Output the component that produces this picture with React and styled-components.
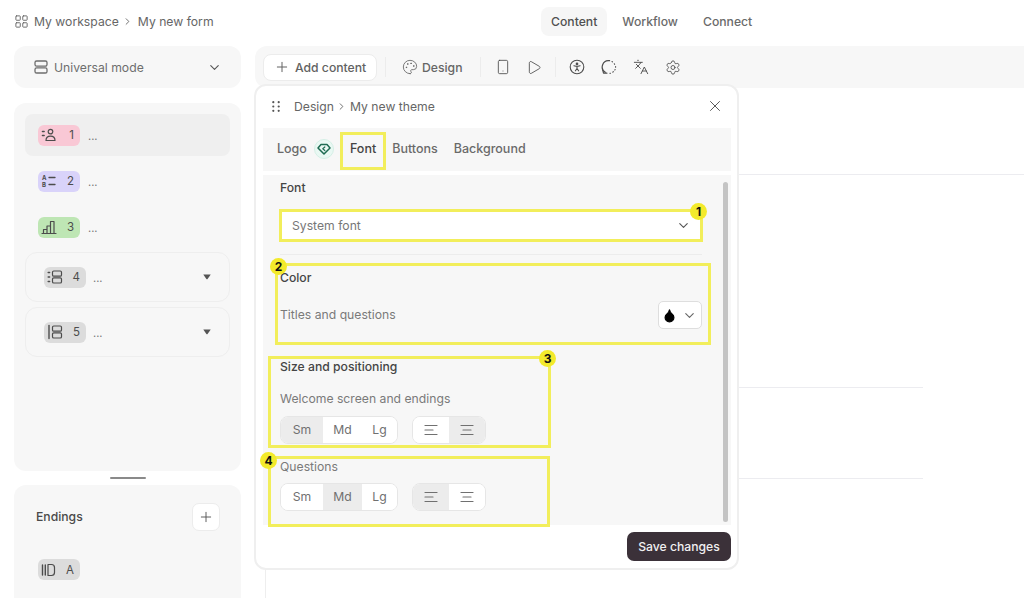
import React from "react";
import styled, { createGlobalStyle } from "styled-components";
import { ChevronDown, ChevronRight, Plus, Palette, Smartphone, Play, Languages, Settings, X, Droplet, LayoutGrid } from "lucide-react";

const Global = createGlobalStyle`
  html, body { margin: 0; padding: 0; background: #fff; overflow: hidden; }
  body { font-family: Inter, "Liberation Sans", sans-serif; font-size: 12.2px; color: #5f5f5f; }
  * { box-sizing: border-box; }
`;

const Page = styled.div`
  position: relative;
  width: 1024px;
  height: 598px;
  overflow: hidden;
  background: #fff;
`;
const Header = styled.header`
  display: flex;
  align-items: center;
  height: 42px;
  padding: 0 14px;
`;
const Crumbs = styled.div`
  display: flex;
  align-items: center;
  width: 527px;
  color: #666;
  gap: 3px;
  svg { flex: none; }
  svg:first-child { margin-right: 2px; }
`;
const CrumbGap = styled.span`
  margin-left: 2px;
`;
const Nav = styled.nav`
  display: flex;
  gap: 5px;
`;
const NavItem = styled.div`
  display: flex;
  align-items: center;
  height: 29px;
  padding: 0 10px;
  border-radius: 8px;
  font-weight: 500;
  color: ${(p) => (p.$active ? "#505050" : "#6a6a6a")};
  background: ${(p) => (p.$active ? "#f6f6f6" : "transparent")};
`;
const Body = styled.div`
  display: grid;
  grid-template-columns: 227px 769px;
  column-gap: 14px;
  padding: 4px 0 0 14px;
  height: 556px;
`;
const Side = styled.aside`
  display: flex;
  flex-direction: column;
  height: 100%;
`;
const ModeBar = styled.div`
  display: flex;
  align-items: center;
  height: 42px;
  padding: 0 19px;
  gap: 5px;
  border-radius: 12px;
  background: #f7f7f7;
  color: #6e6e6e;
  flex: none;
`;
const Push = styled.span`
  margin-left: auto;
  display: flex;
  color: #555;
`;
const QuestionPanel = styled.div`
  display: flex;
  flex-direction: column;
  gap: 4px;
  height: 368px;
  margin-top: 15px;
  padding: 11px;
  border-radius: 12px;
  background: #f7f7f7;
  flex: none;
`;
const Row = styled.div`
  display: flex;
  align-items: center;
  gap: 8px;
  height: 42px;
  padding: 0 13px;
  border-radius: 8px;
  background: ${(p) => (p.$active ? "#efefef" : "transparent")};
  flex: none;
`;
const GroupRow = styled.div`
  display: flex;
  align-items: center;
  gap: 7px;
  height: 50px;
  padding: 0 18px;
  border: 1px solid #eeeeee;
  border-radius: 12px;
  flex: none;
  & + & { margin-top: 1px; }
`;
const Badge = styled.div`
  display: flex;
  align-items: center;
  justify-content: space-between;
  width: 42px;
  height: 21px;
  padding: 0 6px 0 3px;
  border-radius: 6px;
  font-size: 11.500px;
  color: #4c4c4c;
  background: ${(p) => p.$bg};
`;
const Dots = styled.span`
  font-size: 11px;
  line-height: 1;
  color: #777;
  padding-top: 3px;
`;
const Handle = styled.div`
  width: 36px;
  height: 2px;
  margin: 6px auto 6px;
  background: #8a8a8a;
  border-radius: 2px;
  flex: none;
`;
const EndPanel = styled.div`
  flex: 1;
  padding: 18px 21px 0 22px;
  border-radius: 12px 12px 0 0;
  background: #f7f7f7;
`;
const EndHead = styled.div`
  display: flex;
  align-items: center;
  justify-content: space-between;
  font-weight: 500;
  color: #4a4a4a;
  span { margin-top: -2px; }
`;
const SquareBtn = styled.button`
  display: flex;
  align-items: center;
  justify-content: center;
  width: 28px;
  height: 28px;
  padding: 0;
  border: 1px solid #ececec;
  border-radius: 7px;
  background: #fff;
  color: #555;
`;
const EndBadgeWrap = styled.div`
  margin: 28px 0 0 2px;
`;
const Main = styled.main`
  display: flex;
  flex-direction: column;
  height: 100%;
`;
const Toolbar = styled.div`
  display: flex;
  align-items: center;
  height: 42px;
  padding-left: 8px;
  border-radius: 12px 0 0 12px;
  background: #f7f7f7;
  flex: none;
`;
const AddBtn = styled.button`
  display: flex;
  align-items: center;
  gap: 5px;
  width: 114px;
  height: 27px;
  padding: 0 0 0 10px;
  border: 1px solid #ececec;
  border-radius: 8px;
  background: #fff;
  color: #626262;
  font: 500 12.200px Inter, "Liberation Sans", sans-serif;
`;
const Sep = styled.span`
  width: 1px;
  height: 20px;
  margin: ${(p) => p.$m};
  background: #ececec;
  flex: none;
`;
const ToolText = styled.span`
  display: flex;
  align-items: center;
  gap: 4px;
  font-weight: 500;
  color: #666;
`;
const ToolIcon = styled.span`
  display: flex;
  justify-content: center;
  width: 16px;
  margin-right: ${(p) => p.$mr || 16}px;
  color: #4e4e4e;
  flex: none;
`;
const Canvas = styled.div`
  flex: 1;
  margin-left: 10px;
  border-left: 1px solid #eeeeee;
`;
const Rule = styled.div`
  height: ${(p) => p.$h}px;
  width: ${(p) => p.$w}px;
  border-bottom: 1px solid #ececf0;
`;
const Dialog = styled.section`
  position: absolute;
  left: 254px;
  top: 84px;
  display: flex;
  flex-direction: column;
  width: 485px;
  height: 486px;
  padding: 0 6px 0 7px;
  border: 2px solid #efefef;
  border-radius: 12px;
  background: #fff;
`;
const DialogHead = styled.div`
  display: flex;
  align-items: center;
  height: 42px;
  padding: 0 7px 2px 9px;
  color: #666;
  gap: 2px;
  flex: none;
`;
const TitleStart = styled.span`
  margin-left: 12px;
`;
const TitleEnd = styled.span`
  margin-left: 1px;
`;
const Tabs = styled.div`
  display: flex;
  align-items: center;
  gap: 16px;
  height: 43px;
  padding: 0 0 2px 14px;
  background: #f7f7f7;
  font-size: 12.5px;
  flex: none;
`;
const Tab = styled.div`
  display: flex;
  align-items: center;
  gap: 7px;
  height: 100%;
  font-weight: 500;
  color: ${(p) => (p.$active ? "#444" : "#6a6a6a")};
`;
const GemDot = styled.span`
  display: flex;
  align-items: center;
  justify-content: center;
  width: 20px;
  height: 20px;
  border: 1px solid #d5efe6;
  border-radius: 50%;
  background: #e9f8f3;
  color: #1e6b52;
`;
const Content = styled.div`
  position: relative;
  display: flex;
  flex-direction: column;
  height: 350px;
  margin-top: 4px;
  padding: 5px 29px 0 17px;
  background: #f7f7f7;
  flex: none;
`;
const Scrollbar = styled.div`
  position: absolute;
  top: 7px;
  right: 3px;
  width: 5px;
  height: 340px;
  border-radius: 3px;
  background: #c4c4c4;
`;
const Title = styled.div`
  height: 16px;
  line-height: 16px;
  font-weight: 500;
  color: #454545;
`;
const Sub = styled.div`
  height: 16px;
  line-height: 16px;
  color: #7a7a7a;
`;
const Select = styled.div`
  display: flex;
  align-items: center;
  justify-content: space-between;
  height: 29px;
  margin-top: 15px;
  padding: 0 11px 0 12px;
  background: #fff;
  color: #777;
  border-radius: 4px;
  svg { color: #555; }
`;
const Divider = styled.div`
  height: 1px;
  margin: 14px 0 15px;
  background: #ececec;
`;
const ColorRow = styled.div`
  display: flex;
  align-items: center;
  justify-content: space-between;
  margin-top: 15px;
`;
const ColorBtn = styled.div`
  display: flex;
  align-items: center;
  justify-content: space-between;
  width: 44px;
  height: 28px;
  padding: 0 4px 0 3px;
  background: #fff;
  border: 1px solid #dedede;
  border-radius: 5px;
  color: #666;
`;
const TitleSize = styled(Title)`
  margin-top: 30px;
`;
const SubGap = styled(Sub)`
  margin-top: 16px;
`;
const SubQuestions = styled(Sub)`
  margin-top: 15px;
`;
const Controls = styled.div`
  display: flex;
  gap: 14px;
  margin-top: ${(p) => p.$mt}px;
`;
const Seg = styled.div`
  display: flex;
  height: 28px;
  border: 1px solid #e6e6e6;
  border-radius: 8px;
  overflow: hidden;
  background: #fff;
`;
const SegBtn = styled.div`
  display: flex;
  align-items: center;
  justify-content: center;
  width: ${(p) => p.$w}px;
  padding-bottom: 1px;
  color: #707070;
  background: ${(p) => (p.$active ? "#ececec" : "#fff")};
`;
const Footer = styled.div`
  display: flex;
  justify-content: flex-end;
  padding-top: 7px;
`;
const SaveBtn = styled.button`
  width: 104px;
  height: 29px;
  padding: 0;
  border: 0;
  border-radius: 7px;
  background: #3b3139;
  color: #f1eff1;
  font: 500 12.200px Inter, "Liberation Sans", sans-serif;
`;
const Box = styled.div`
  position: absolute;
  left: ${(p) => p.$x}px;
  top: ${(p) => p.$y}px;
  width: ${(p) => p.$w}px;
  height: ${(p) => p.$h}px;
  border: 3px solid #f2ee5b;
  pointer-events: none;
`;
const Pin = styled.div`
  position: absolute;
  left: ${(p) => p.$x}px;
  top: ${(p) => p.$y}px;
  width: 17px;
  height: 17px;
  border-radius: 50%;
  background: #f3ea2b;
  color: #111;
  font: 700 12px/17px Inter, "Liberation Sans", sans-serif;
  text-align: center;
`;

const Ico = ({ children, w = 16, sw = 1.200 }) => (
  <svg width={w} height="16" viewBox="0 0 16 16" fill="none" stroke="currentColor" strokeWidth={sw} strokeLinecap="round" strokeLinejoin="round">{children}</svg>
);
const ModeIcon = () => (
  <Ico sw={1.300}><rect x="2" y="2" width="12" height="5.200" rx="1.600" /><rect x="2" y="8.800" width="12" height="5.200" rx="1.600" /></Ico>
);
const ContactIcon = () => (
  <Ico><circle cx="9.500" cy="4.600" r="2.300" /><path d="M5 13.500c0-3 1.800-4.400 4.500-4.400s4.500 1.400 4.500 4.400z" /><path d="M1.500 4.500h1.600M1.500 8.500h1.600" strokeWidth="1.600" /></Ico>
);
const ChoiceIcon = () => (
  <Ico>
    <text x="1" y="7" fontSize="6" fontWeight="700" fill="currentColor" stroke="none" fontFamily="Inter, sans-serif">A</text>
    <text x="1" y="14" fontSize="6" fontWeight="700" fill="currentColor" stroke="none" fontFamily="Inter, sans-serif">B</text>
    <path d="M8 4.500h6M8 11.500h6" strokeWidth="1.300" />
  </Ico>
);
const BarsIcon = () => (
  <Ico><path d="M1 14.500h14M2.500 14.500v-4h3.500v4M6 14.500V7h3.500v7.500M9.500 14.500V2.500H13v12" /></Ico>
);
const ListGroupIcon = () => (
  <Ico><path d="M1.200 3.500h1.400M1.200 8h1.400M1.200 12.500h1.400" strokeWidth="1.500" /><rect x="5.500" y="2" width="9" height="5.200" rx="1.300" /><rect x="5.500" y="8.800" width="9" height="5.200" rx="1.300" /></Ico>
);
const SideGroupIcon = () => (
  <Ico><path d="M2 1.500v13" strokeWidth="1.400" /><rect x="5.500" y="2" width="9" height="5.200" rx="1.300" /><rect x="5.500" y="8.800" width="9" height="5.200" rx="1.300" /></Ico>
);
const EndIcon = () => (
  <Ico><path d="M1.500 3v10M4.300 3v10" strokeWidth="1.400" /><path d="M7 2.500h3.500a3 3 0 0 1 3 3v5a3 3 0 0 1-3 3H7z" /></Ico>
);
const Caret = () => (
  <svg width="8" height="6" viewBox="0 0 8 6"><path d="M0.300 0.500h7.400L4.600 5a.8.8 0 0 1-1.200 0z" fill="#555" /></svg>
);
const A11yIcon = () => (
  <Ico sw={1.100}><circle cx="8" cy="8" r="6.800" /><circle cx="8" cy="4.900" r=".8" fill="currentColor" /><path d="M4.900 6.700l2.100.6h2l2.100-.6M8 7.300v2.200M8 9.500l-1.600 2.300M8 9.500l1.600 2.300" /></Ico>
);
const LoopIcon = () => (
  <Ico>
    <path d="M4.300 13.300A6.300 6.300 0 0 1 8.600 1.700" />
    <path d="M11 2.500l.5.400M13.300 4.800l.3.500M14.600 7.600v.6M14.100 10.500l-.3.500M12.300 12.700l-.5.400M9.500 14.200h-.6" strokeWidth="1.100" />
    <path d="M1.700 10.800l.8 3.400h3.400" />
  </Ico>
);
const GemIcon = () => (
  <svg width="14" height="14" viewBox="0 0 14 14" fill="none" stroke="currentColor" strokeWidth="1.500" strokeLinejoin="round" strokeLinecap="round">
    <path d="M4 2.500h6L13 6l-6 6-6-6z" />
    <path d="M7.800 5L5.800 6.800l2 1.700" strokeWidth="1.200" />
  </svg>
);
const GripIcon = () => (
  <svg width="8" height="11" viewBox="0 0 8 11" fill="#555">
    {[1.200, 5.500, 9.800].map((y) => [1.300, 6.700].map((x) => <circle key={x + "-" + y} cx={x} cy={y} r="1.100" />))}
  </svg>
);
const AlignIcon = ({ center }) => (
  <Ico>
    <path d={center ? "M2 3.500h12M4 8h8M2 12.500h12" : "M2 3.500h12M2 8h8M2 12.500h12"} />
  </Ico>
);

const Questions = [
  { n: "1", bg: "#f9c8d5", icon: <ContactIcon />, active: true },
  { n: "2", bg: "#d9d3fa", icon: <ChoiceIcon /> },
  { n: "3", bg: "#bee6b4", icon: <BarsIcon /> },
];
const Groups = [
  { n: "4", icon: <ListGroupIcon /> },
  { n: "5", icon: <SideGroupIcon /> },
];
const Callouts = [
  { x: 340, y: 132, w: 46, h: 38 },
  { x: 279, y: 209, w: 424, h: 33 },
  { x: 275, y: 263, w: 436, h: 82 },
  { x: 268, y: 356, w: 283, h: 92 },
  { x: 268, y: 456, w: 282, h: 71 },
];
const Pins = [
  { x: 690, y: 203, t: "1" },
  { x: 270, y: 258, t: "2" },
  { x: 539, y: 350, t: "3" },
  { x: 260, y: 452, t: "4" },
];

const Sizes = ({ active }) => (
  <Seg>
    {[["Sm", 42], ["Md", 39], ["Lg", 35]].map(([t, w]) => (
      <SegBtn key={t} $w={w} $active={active === t}>{t}</SegBtn>
    ))}
  </Seg>
);
const Aligns = ({ active }) => (
  <Seg>
    <SegBtn $w={36} $active={active === "left"}><AlignIcon /></SegBtn>
    <SegBtn $w={36} $active={active === "center"}><AlignIcon center /></SegBtn>
  </Seg>
);

export default function App() {
  return (
    <Page>
      <Global />
      <Header>
        <Crumbs>
          <LayoutGrid size={15} strokeWidth={1.500} />
          <span>My workspace</span>
          <ChevronRight size={11} strokeWidth={2} />
          <CrumbGap>My new form</CrumbGap>
        </Crumbs>
        <Nav>
          <NavItem $active>Content</NavItem>
          <NavItem>Workflow</NavItem>
          <NavItem>Connect</NavItem>
        </Nav>
      </Header>
      <Body>
        <Side>
          <ModeBar>
            <ModeIcon />
            <span>Universal mode</span>
            <Push><ChevronDown size={15} strokeWidth={1.800} /></Push>
          </ModeBar>
          <QuestionPanel>
            {Questions.map((q) => (
              <Row key={q.n} $active={q.active}>
                <Badge $bg={q.bg}>{q.icon}<span>{q.n}</span></Badge>
                <Dots>...</Dots>
              </Row>
            ))}
            {Groups.map((g) => (
              <GroupRow key={g.n}>
                <Badge $bg="#dcdcdc">{g.icon}<span>{g.n}</span></Badge>
                <Dots>...</Dots>
                <Push><Caret /></Push>
              </GroupRow>
            ))}
          </QuestionPanel>
          <Handle />
          <EndPanel>
            <EndHead>
              <span>Endings</span>
              <SquareBtn><Plus size={16} strokeWidth={1.400} /></SquareBtn>
            </EndHead>
            <EndBadgeWrap>
              <Badge $bg="#dcdcdc"><EndIcon /><span>A</span></Badge>
            </EndBadgeWrap>
          </EndPanel>
        </Side>
        <Main>
          <Toolbar>
            <AddBtn><Plus size={16} strokeWidth={1.500} />Add content</AddBtn>
            <Sep $m="0 16px 0 8px" />
            <ToolText><Palette size={16} strokeWidth={1.300} />Design</ToolText>
            <Sep $m="0 14px 0 18px" />
            <ToolIcon $mr={15}><Smartphone size={18} strokeWidth={1.300} /></ToolIcon>
            <ToolIcon $mr={13}><Play size={17} strokeWidth={1.300} /></ToolIcon>
            <Sep $m="0 13px 0 0" />
            <ToolIcon><A11yIcon /></ToolIcon>
            <ToolIcon><LoopIcon /></ToolIcon>
            <ToolIcon><Languages size={16} strokeWidth={1.400} /></ToolIcon>
            <ToolIcon><Settings size={17} strokeWidth={1.300} /></ToolIcon>
          </Toolbar>
          <Canvas>
            <Rule $h={87} $w={759} />
            <Rule $h={213} $w={657} />
            <Rule $h={91} $w={657} />
          </Canvas>
        </Main>
      </Body>
      <Dialog>
        <DialogHead>
          <GripIcon />
          <TitleStart>Design</TitleStart>
          <ChevronRight size={11} strokeWidth={2} />
          <TitleEnd>My new theme</TitleEnd>
          <Push><X size={18} strokeWidth={1.300} /></Push>
        </DialogHead>
        <Tabs>
          <Tab>Logo<GemDot><GemIcon /></GemDot></Tab>
          <Tab $active>Font</Tab>
          <Tab>Buttons</Tab>
          <Tab>Background</Tab>
        </Tabs>
        <Content>
          <Title>Font</Title>
          <Select>
            <span>System font</span>
            <ChevronDown size={15} strokeWidth={1.800} />
          </Select>
          <Divider />
          <Title>Color</Title>
          <ColorRow>
            <Sub>Titles and questions</Sub>
            <ColorBtn>
              <Droplet size={15} fill="#000" color="#000" />
              <ChevronDown size={15} strokeWidth={1.800} />
            </ColorBtn>
          </ColorRow>
          <TitleSize>Size and positioning</TitleSize>
          <SubGap>Welcome screen and endings</SubGap>
          <Controls $mt={9}><Sizes active="Sm" /><Aligns active="center" /></Controls>
          <SubQuestions>Questions</SubQuestions>
          <Controls $mt={8}><Sizes active="Md" /><Aligns active="left" /></Controls>
          <Scrollbar />
        </Content>
        <Footer><SaveBtn>Save changes</SaveBtn></Footer>
      </Dialog>
      {Callouts.map((c) => (
        <Box key={c.x + "-" + c.y} $x={c.x} $y={c.y} $w={c.w} $h={c.h} />
      ))}
      {Pins.map((p) => (
        <Pin key={p.t} $x={p.x} $y={p.y}>{p.t}</Pin>
      ))}
    </Page>
  );
}
